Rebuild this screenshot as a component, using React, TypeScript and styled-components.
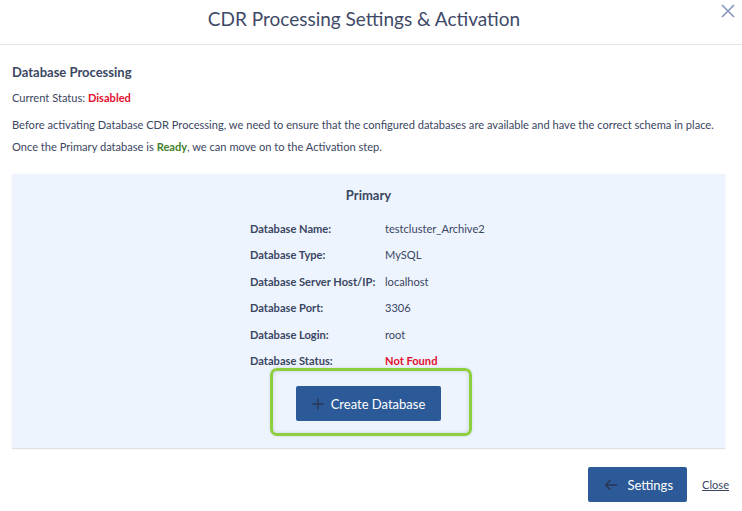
import React from "react";
import styled, { createGlobalStyle } from "styled-components";

const GlobalStyle = createGlobalStyle`
  body {
    margin: 0;
    background: #fff;
    font-family: Lato, "Open Sans", sans-serif;
    color: #3b4662;
  }
`;

const Modal = styled.div`
  width: 742px;
  min-height: 511px;
  display: flex;
  flex-direction: column;
  background: #fff;
  position: relative;
`;

const Header = styled.div`
  flex-shrink: 0;
  height: 44px;
  padding-right: 14px;
  display: flex;
  align-items: center;
  justify-content: center;
  border-bottom: 1px solid #e3e6ef;
`;

const Title = styled.h1`
  margin: 0 0 7px;
  font-size: 19px;
  font-weight: 400;
  color: #3f4a67;
`;

const CloseIcon = styled.button`
  position: absolute;
  top: 2px;
  right: 5px;
  width: 18px;
  height: 18px;
  border: none;
  background: none;
  padding: 0;
  color: #8595c0;
  cursor: pointer;
`;

const Body = styled.div`
  padding: 19px 12px 0 12px;
  display: flex;
  flex-direction: column;
`;

const SectionTitle = styled.h2`
  margin: 0 0 7px;
  font-size: 13px;
  font-weight: 700;
  color: #3b4662;
  line-height: 16px;
`;

const Text = styled.p`
  margin: 0;
  font-size: 11.1px;
  line-height: 22px;
  color: #3b4662;
`;

const Status = styled.span<{ tone: "red" | "green" }>`
  font-weight: 700;
  color: ${(p) => (p.tone === "red" ? "#e3102f" : "#3f7f2d")};
`;

const Panel = styled.div`
  margin-top: 16px;
  margin-right: 5px;
  background: #edf4fe;
  box-shadow: 0 1px 1px rgba(0, 0, 0, 0.12);
  display: flex;
  flex-direction: column;
  align-items: center;
  padding: 13px 0 12px;
`;

const PanelTitle = styled.h3`
  margin: 0 0 18px;
  font-size: 13px;
  font-weight: 700;
  color: #3b4662;
  line-height: 16px;
`;

const Grid = styled.div`
  display: grid;
  grid-template-columns: 135px 104px;
  grid-auto-rows: 26.4px;
  margin-left: 2px;
`;

const Label = styled.div`
  font-size: 11.1px;
  font-weight: 700;
  color: #3b4662;
  line-height: 16px;
`;

const Value = styled.div<{ alert?: boolean }>`
  font-size: 11.1px;
  line-height: 16px;
  color: ${(p) => (p.alert ? "#e3102f" : "#3b4662")};
  font-weight: ${(p) => (p.alert ? 700 : 400)};
`;

const FocusRing = styled.div`
  margin-top: -11px;
  margin-left: 5px;
  padding: 15px 28px 12px 23px;
  border: 3px solid #8dcf3f;
  border-radius: 7px;
  box-shadow: inset 0 0 4px rgba(0, 0, 0, 0.15), 0 0 3px rgba(0, 0, 0, 0.12);
`;

const Button = styled.button`
  height: 35px;
  display: flex;
  align-items: center;
  gap: 7px;
  padding: 0 16px;
  border: none;
  border-radius: 2px;
  background: #2c5a98;
  color: #fff;
  font-family: Lato, "Open Sans", sans-serif;
  font-size: 13px;
  cursor: pointer;
`;

const Footer = styled.div`
  margin-top: 19px;
  padding-right: 1px;
  display: flex;
  justify-content: flex-end;
  align-items: center;
  gap: 15px;
`;

const CloseLink = styled.a`
  font-size: 11.1px;
  color: #3b4662;
  text-decoration: underline;
  cursor: pointer;
`;

const Plus = () => (
  <svg width="12" height="12" viewBox="0 0 12 12">
    <path d="M6 0.5v11M0.5 6h11" stroke="#2a3550" strokeWidth="1.3" />
  </svg>
);

const Arrow = () => (
  <svg width="14" height="12" viewBox="0 0 14 12">
    <path d="M13 6H1.5M6.5 1L1.5 6l5 5" fill="none" stroke="#2a3550" strokeWidth="1.3" />
  </svg>
);

const rows: { label: string; value: string; alert?: boolean }[] = [
  { label: "Database Name:", value: "testcluster_Archive2" },
  { label: "Database Type:", value: "MySQL" },
  { label: "Database Server Host/IP:", value: "localhost" },
  { label: "Database Port:", value: "3306" },
  { label: "Database Login:", value: "root" },
  { label: "Database Status:", value: "Not Found", alert: true },
];

export default function App() {
  return (
    <>
      <GlobalStyle />
      <Modal>
        <Header>
          <Title>CDR Processing Settings &amp; Activation</Title>
        </Header>
        <CloseIcon aria-label="close">
          <svg width="18" height="18" viewBox="0 0 18 18">
            <path d="M3 3l12 12M15 3L3 15" stroke="currentColor" strokeWidth="1.6" />
          </svg>
        </CloseIcon>
        <Body>
          <SectionTitle>Database Processing</SectionTitle>
          <Text>
            Current Status: <Status tone="red">Disabled</Status>
          </Text>
          <Text style={{ marginTop: 5 }}>
            Before activating Database CDR Processing, we need to ensure that the configured databases are available and have the correct schema in place.
          </Text>
          <Text>
            Once the Primary database is <Status tone="green">Ready</Status>, we can move on to the Activation step.
          </Text>
          <Panel>
            <PanelTitle>Primary</PanelTitle>
            <Grid>
              {rows.map((r) => (
                <React.Fragment key={r.label}>
                  <Label>{r.label}</Label>
                  <Value alert={r.alert}>{r.value}</Value>
                </React.Fragment>
              ))}
            </Grid>
            <FocusRing>
              <Button>
                <Plus />
                Create Database
              </Button>
            </FocusRing>
          </Panel>
          <Footer>
            <Button style={{ padding: "0 14px 0 16px", gap: 9 }}>
              <Arrow />
              Settings
            </Button>
            <CloseLink>Close</CloseLink>
          </Footer>
        </Body>
      </Modal>
    </>
  );
}
